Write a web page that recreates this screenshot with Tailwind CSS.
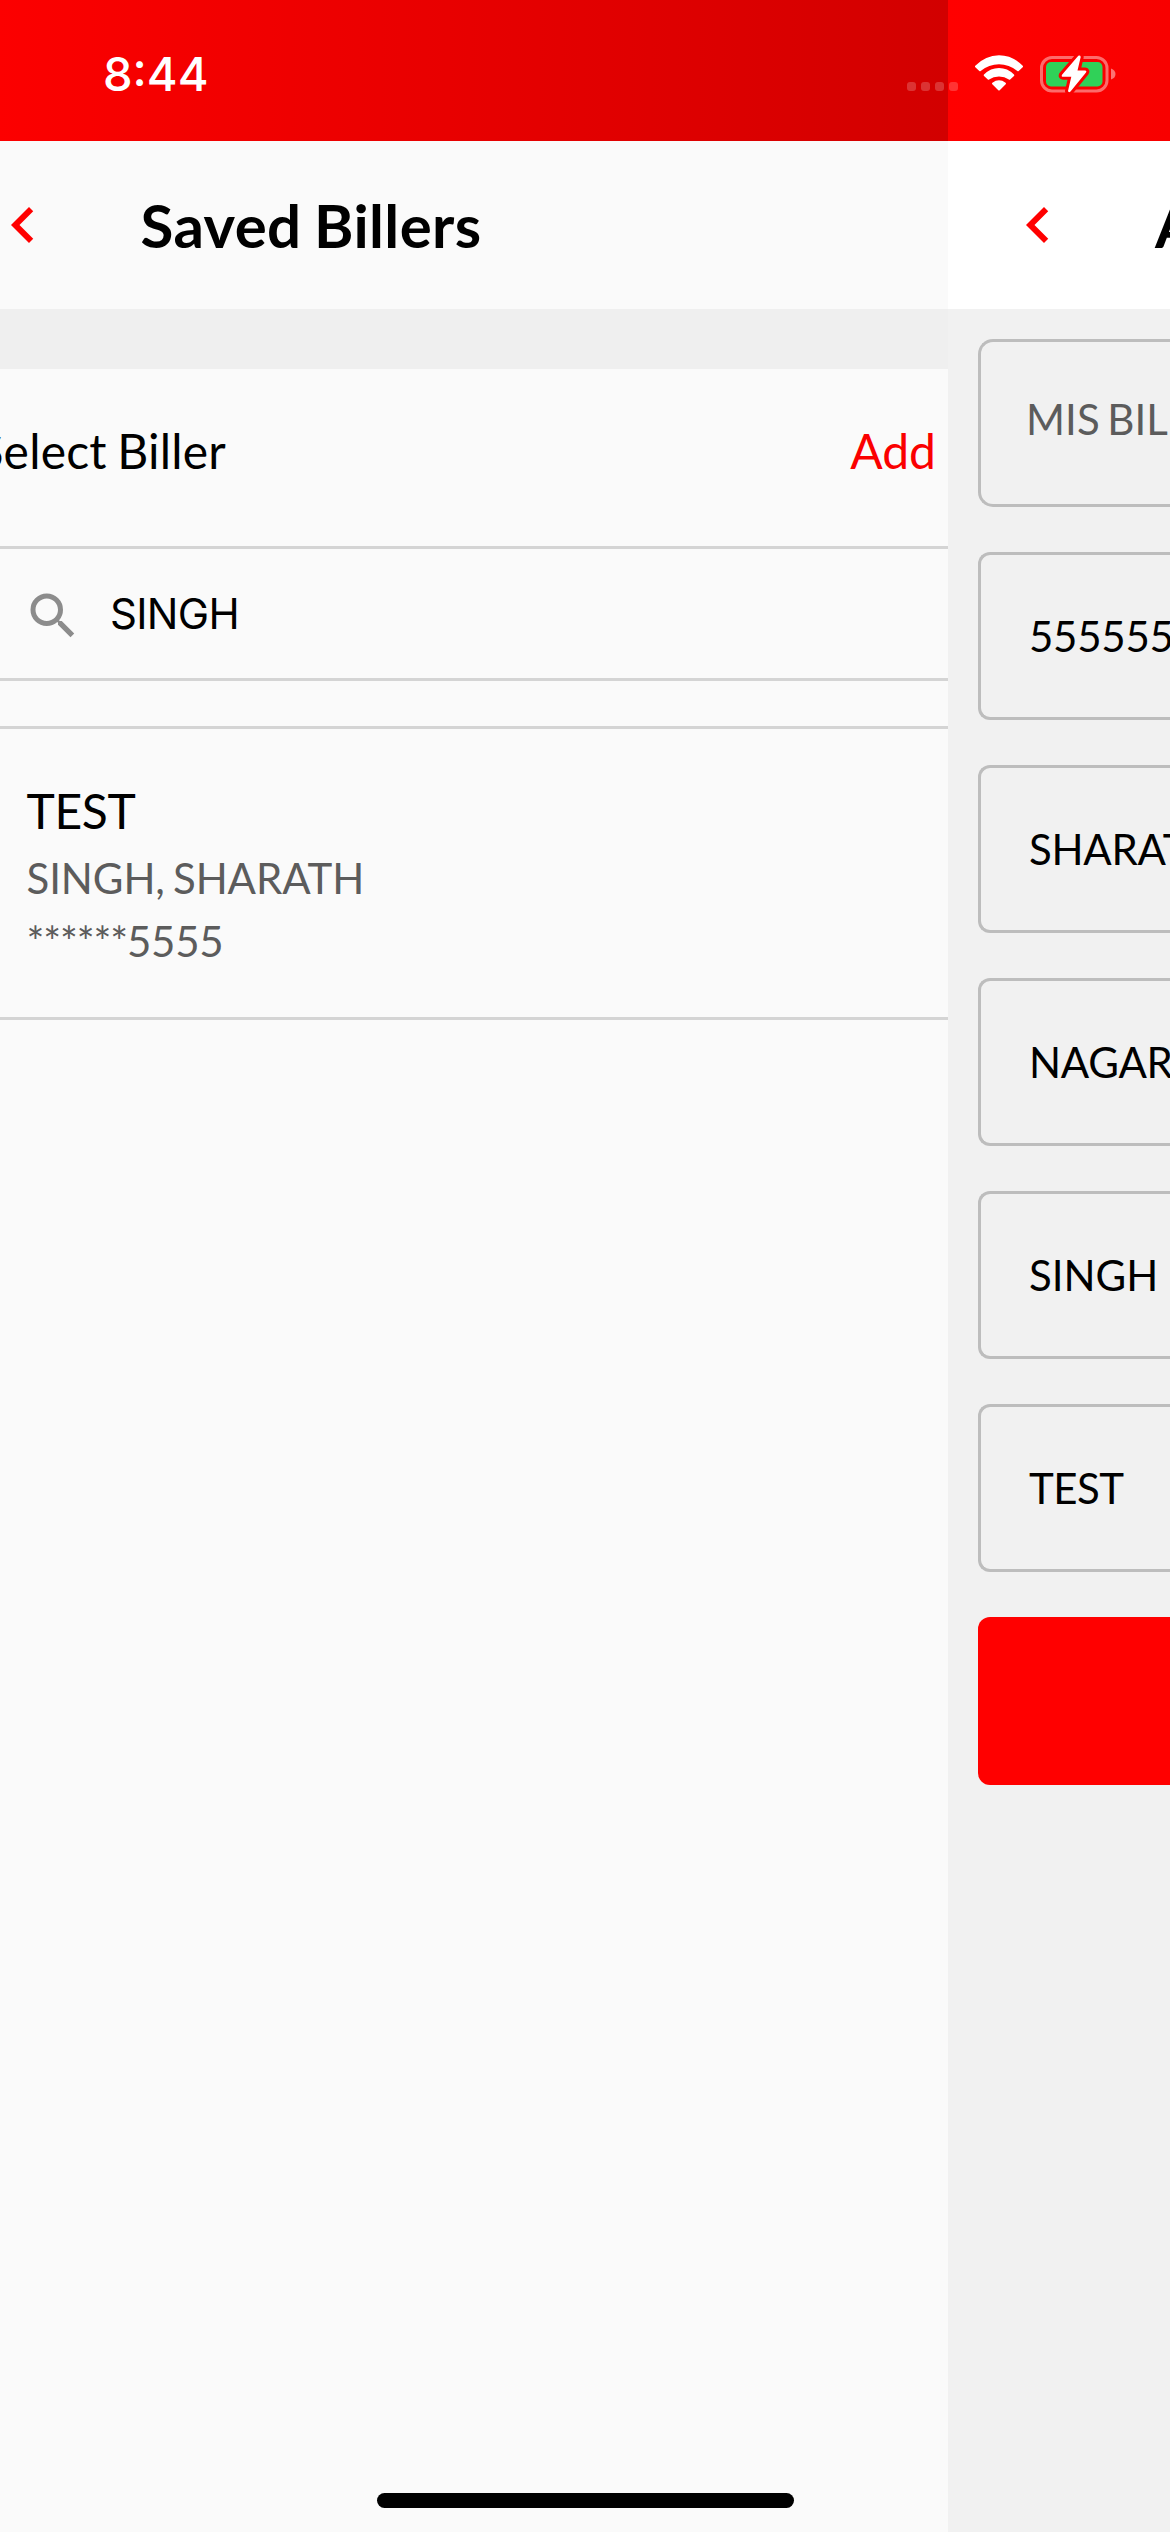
<!DOCTYPE html>
<html lang="en">
<head>
<meta charset="utf-8">
<title>Saved Billers</title>
<script src="https://cdn.jsdelivr.net/npm/@tailwindcss/browser@4"></script>
</head>
<body class="relative flex h-[2532px] w-[1170px] overflow-hidden bg-[#fafafa] font-['Lato',sans-serif] text-black">

  <!-- Outgoing page: saved billers -->
  <main class="flex w-[948px] shrink-0 flex-col overflow-hidden bg-[#fafafa]">
    <div class="h-[141px] bg-linear-to-r from-[#fc0000] to-[#d20000]"></div>
    <header class="flex h-[168px] items-center">
      <svg class="-ml-[13.5px] size-[72px] shrink-0" viewBox="0 0 24 24" fill="#ff0000"><path d="M15.41 7.41 14 6l-6 6 6 6 1.41-1.41L10.83 12z"/></svg>
      <h1 class="ml-[82px] text-[60px] font-bold leading-[72px] tracking-[0.4px] [word-spacing:-2.5px]">Saved Billers</h1>
    </header>
    <div class="h-[60px] bg-[#efefef]"></div>
    <section class="flex h-[180px] items-center justify-between border-b-3 border-[#d4d4d4] pr-3 pb-[14px] text-[48px] leading-[58px]">
      <h2 class="-ml-[22.5px] tracking-[0.2px] [word-spacing:-2px]">Select Biller</h2>
      <span class="text-[#fa0000]">Add</span>
    </section>
    <div class="flex h-[132px] items-center border-b-3 border-[#d4d4d4] pl-[23px]">
      <svg class="mt-1 size-[60px]" viewBox="0 0 24 24" fill="#8c8c8c"><path d="M15.5 14h-.79l-.28-.27A6.471 6.471 0 0 0 16 9.500 6.500 6.500 0 1 0 9.500 16c1.610 0 3.090-.590 4.230-1.570l.27.28v.79l5 4.990L20.490 19l-4.990-5zm-6 0C7.010 14 5 11.990 5 9.500S7.010 5 9.500 5 14 7.010 14 9.500 11.990 14 9.500 14z"/></svg>
      <span class="ml-[27px] font-['Inter'] text-[42px] leading-[50px] tracking-[-0.7px]">SINGH</span>
    </div>
    <article class="mt-[45px] h-[294px] border-y-3 border-[#d4d4d4] pt-[53px] pl-[26.5px]">
      <h3 class="text-[48px] leading-[58px] tracking-[-0.4px]">TEST</h3>
      <div class="mt-[7px] text-[42px] leading-[62px] text-[#5c5c5c]">
        <p class="tracking-[-0.1px] [word-spacing:-2.5px]">SINGH, SHARATH</p>
        <p class="pt-px tracking-[-0.25px]"><span class="tracking-[-1.1px]">******</span>5555</p>
      </div>
    </article>
  </main>

  <!-- Incoming page: biller form -->
  <aside class="flex w-[222px] shrink-0 flex-col overflow-hidden bg-[#f1f1f1]">
    <div class="h-[141px] shrink-0 bg-linear-to-r from-[#ff0000] to-[#f80000]"></div>
    <header class="flex h-[168px] shrink-0 items-center bg-white">
      <svg class="ml-[54px] size-[72px] shrink-0" viewBox="0 0 24 24" fill="#ff0000"><path d="M15.41 7.41 14 6l-6 6 6 6 1.41-1.41L10.83 12z"/></svg>
      <span class="ml-[81px] text-[60px] font-bold leading-[72px]">A</span>
    </header>
    <div class="mt-[30px] ml-[30px] flex flex-col gap-[45px] text-[42px] leading-[50px] tracking-[-0.25px] whitespace-nowrap">
      <div class="flex h-[168px] items-center rounded-l-[15px] border-3 border-r-0 border-[#bdbdbd] pb-2 pl-[45px] tracking-[0.1px] text-[#5c5c5c] [word-spacing:-3.5px]">MIS BIL</div>
      <div class="flex h-[168px] items-center rounded-l-[12px] border-3 border-r-0 border-[#bdbdbd] pl-12">555555</div>
      <div class="flex h-[168px] items-center rounded-l-[12px] border-3 border-r-0 border-[#bdbdbd] pl-12">SHARAT</div>
      <div class="flex h-[168px] items-center rounded-l-[12px] border-3 border-r-0 border-[#bdbdbd] pl-12">NAGAR</div>
      <div class="flex h-[168px] items-center rounded-l-[12px] border-3 border-r-0 border-[#bdbdbd] pl-12 tracking-normal">SINGH</div>
      <div class="flex h-[168px] items-center rounded-l-[12px] border-3 border-r-0 border-[#bdbdbd] pl-12 tracking-[-0.5px]">TEST</div>
      <div class="h-[168px] rounded-l-[12px] bg-[#ff0000]"></div>
    </div>
  </aside>

  <!-- System status bar over both pages -->
  <div class="absolute inset-x-0 top-0 flex h-[141px] items-start text-white">
    <span class="mt-[46px] ml-[103px] w-[804px] font-['Inter'] text-[47px] font-medium leading-[56px]">8:44</span>
    <div class="mt-[82px] flex gap-[5px]">
      <i class="size-[9px] rounded-[3px] bg-white/20"></i>
      <i class="size-[9px] rounded-[3px] bg-white/20"></i>
      <i class="size-[9px] rounded-[3px] bg-white/20"></i>
      <i class="size-[9px] rounded-[3px] bg-white/20"></i>
    </div>
    <svg class="mt-[55px] ml-[17px] h-9 w-12" viewBox="0 0 48 36" fill="#fff" stroke="#fff" stroke-width="2" stroke-linejoin="round">
      <path d="M1 11.500Q11 1.200 24 1.200T47 11.500L43 15.200Q34.500 8.200 24 8.200T5 15.200Z"/>
      <path d="M9.700 20.200Q16 14 24 14T38.300 20.200L34.500 23.700Q30 20.500 24 20.500T13.500 23.700Z"/>
      <path d="M18 28.500Q24 24 30 28.500L24 34.500Z"/>
    </svg>
    <svg class="mt-[54px] ml-[17px] h-10 w-[76px]" viewBox="0 0 76 40">
      <rect x="1.500" y="3.500" width="65.500" height="33.500" rx="10.500" fill="none" stroke="#fff" stroke-opacity=".42" stroke-width="3"/>
      <rect x="6" y="8" width="56.500" height="24.500" rx="5" fill="#30d158"/>
      <path d="M71 14.500q4.500 1.500 4.500 5.500t-4.500 5.500z" fill="#fff" fill-opacity=".45"/>
      <path d="M38.300 1.800 22 20.700q-1 2 1 2h8.300L28 37q.5 2 2.500.5L46 18.500q1-2-1-2h-7.500l3.200-13.500q-.4-2-2.400-1.200z" fill="#fff" stroke="#fb0000" stroke-width="6" stroke-linejoin="round"/>
      <path d="M38.300 1.800 22 20.700q-1 2 1 2h8.300L28 37q.5 2 2.500.5L46 18.500q1-2-1-2h-7.500l3.200-13.500q-.4-2-2.400-1.200z" fill="#fff"/>
    </svg>
  </div>

  <!-- Home indicator -->
  <div class="absolute bottom-6 left-[377px] h-[15px] w-[417px] rounded-full bg-black"></div>
</body>
</html>
